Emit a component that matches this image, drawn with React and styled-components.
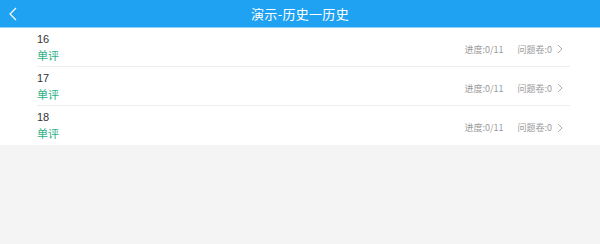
import React from 'react';
import styled, { createGlobalStyle } from 'styled-components';

const GlobalStyle = createGlobalStyle`
  html, body {
    margin: 0;
    padding: 0;
    background: #f4f4f4;
    font-family: "Noto Sans CJK SC", "Liberation Sans", sans-serif;
  }
`;

const Page = styled.div`
  width: 600px;
  height: 244px;
  background: #f4f4f4;
  display: flex;
  flex-direction: column;
`;

const Header = styled.div`
  height: 28px;
  background: #1fa2f2;
  border-bottom: 1px solid #8fd2fb;
  box-sizing: border-box;
  display: flex;
  align-items: center;
  justify-content: center;
  position: relative;
  color: #fff;
`;

const BackBtn = styled.div`
  position: absolute;
  left: 9px;
  top: 6px;
  width: 10px;
  height: 16px;
  display: flex;
  align-items: center;
`;

const Title = styled.div`
  font-size: 13px;
  letter-spacing: 0.3px;
`;

const List = styled.div`
  background: #fff;
  padding: 0 30px 0 37px;
`;

const Row = styled.div`
  height: 39px;
  display: flex;
  align-items: center;
  justify-content: space-between;
  border-bottom: ${(p) => (p.last ? 'none' : '1px solid #eeeeee')};
  box-sizing: border-box;
`;

const Left = styled.div`
  display: flex;
  flex-direction: column;
  gap: 2px;
`;

const Num = styled.div`
  font-family: "Liberation Sans", sans-serif;
  font-size: 11px;
  color: #333;
  line-height: 14px;
`;

const Tag = styled.div`
  font-size: 11px;
  color: #2fb088;
  line-height: 15px;
`;

const Right = styled.div`
  display: flex;
  align-items: center;
  font-size: 9px;
  color: #9a9a9a;
  padding-top: 4px;
  margin-right: 7px;
`;

const Stat = styled.span`
  margin-right: ${(p) => p.gap}px;
`;

const Chevron = () => (
  <svg width="6" height="10" viewBox="0 0 6 10">
    <path d="M1 1 L5 5 L1 9" fill="none" stroke="#aaa" strokeWidth="1" />
  </svg>
);

const rows = ['16', '17', '18'];

export default function App() {
  return (
    <Page>
      <GlobalStyle />
      <Header>
        <BackBtn>
          <svg width="8" height="14" viewBox="0 0 8 14">
            <path d="M7 1 L1 7 L7 13" fill="none" stroke="#fff" strokeWidth="1.2" />
          </svg>
        </BackBtn>
        <Title>演示-历史一历史</Title>
      </Header>
      <List>
        {rows.map((n, i) => (
          <Row key={n} last={i === rows.length - 1}>
            <Left>
              <Num>{n}</Num>
              <Tag>单评</Tag>
            </Left>
            <Right>
              <Stat gap={14}>进度:0/11</Stat>
              <Stat gap={5}>问题卷:0</Stat>
              <Chevron />
            </Right>
          </Row>
        ))}
      </List>
    </Page>
  );
}
